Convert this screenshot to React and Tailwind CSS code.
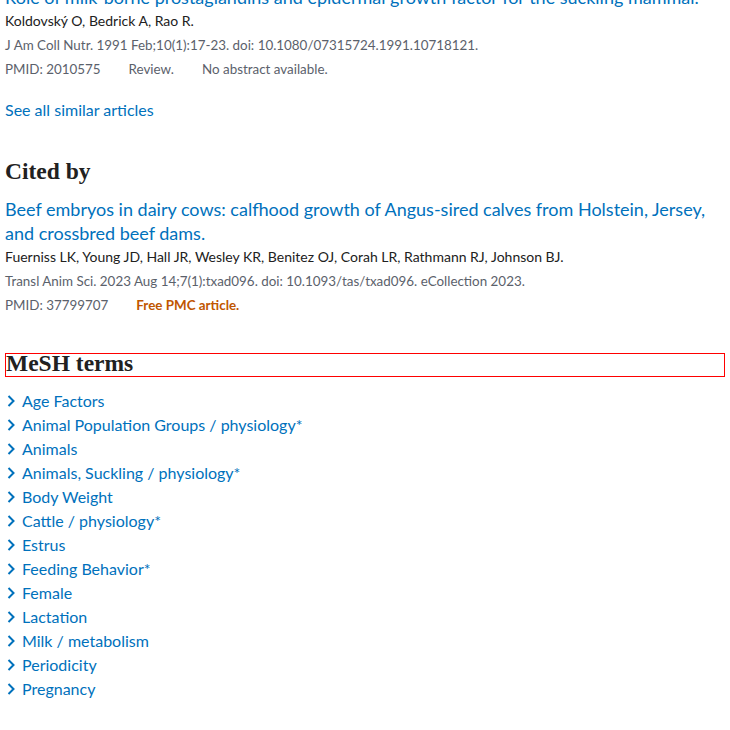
import React from 'react';

const sans = "font-['Lato','Liberation_Sans',sans-serif]";
const serif = "font-['Liberation_Serif','DejaVu_Serif',serif]";

const meshTerms = [
  'Age Factors',
  'Animal Population Groups / physiology*',
  'Animals',
  'Animals, Suckling / physiology*',
  'Body Weight',
  'Cattle / physiology*',
  'Estrus',
  'Feeding Behavior*',
  'Female',
  'Lactation',
  'Milk / metabolism',
  'Periodicity',
  'Pregnancy',
];

function Chevron() {
  return (
    <svg viewBox="0 0 10 12" className="w-[10px] h-[12px] ml-[1px] mr-[6px] shrink-0" fill="none" stroke="currentColor" strokeWidth="2">
      <path d="M2.5 1 L7.5 6 L2.5 11" />
    </svg>
  );
}

function Docsum({ title, authors, citation, children }) {
  return (
    <div>
      <a href="#" className="block text-[18px] leading-[24px] text-[#0071bc]">{title}</a>
      <div className="text-[14px] leading-[24px] text-[#212121]">{authors}</div>
      <div className="text-[13.4px] leading-[24px] text-[#5b616b]">{citation}</div>
      <div className="flex text-[13.4px] leading-[24px] text-[#5b616b] gap-[28px]">{children}</div>
    </div>
  );
}

function App() {
  return (
    <div className={`min-h-screen bg-white overflow-hidden px-[5px] ${sans}`}>
      <div className="-mt-[15px]">
        <Docsum
          title="Role of milk-borne prostaglandins and epidermal growth factor for the suckling mammal."
          authors="Koldovský O, Bedrick A, Rao R."
          citation="J Am Coll Nutr. 1991 Feb;10(1):17-23. doi: 10.1080/07315724.1991.10718121."
        >
          <span>PMID: 2010575</span>
          <span>Review.</span>
          <span>No abstract available.</span>
        </Docsum>
      </div>

      <a href="#" className="block mt-[17px] text-[16px] leading-[24px] text-[#0071bc]">See all similar articles</a>

      <h2 className={`${serif} font-bold text-[23.5px] leading-[26px] text-[#212121] mt-[36px] mb-[13px]`}>Cited by</h2>
      <Docsum
        title="Beef embryos in dairy cows: calfhood growth of Angus-sired calves from Holstein, Jersey, and crossbred beef dams."
        authors="Fuerniss LK, Young JD, Hall JR, Wesley KR, Benitez OJ, Corah LR, Rathmann RJ, Johnson BJ."
        citation="Transl Anim Sci. 2023 Aug 14;7(1):txad096. doi: 10.1093/tas/txad096. eCollection 2023."
      >
        <span>PMID: 37799707</span>
        <span className="font-bold text-[#c05600]">Free PMC article.</span>
      </Docsum>

      <h2 className={`${serif} font-bold text-[23.5px] leading-[18px] pb-[4px] text-[#212121] mt-[36px] border border-[#ff0000]`}>MeSH terms</h2>
      <ul className="mt-[12px]">
        {meshTerms.map((term) => (
          <li key={term} className="flex items-center text-[16px] leading-[24px] text-[#0071bc]">
            <Chevron />
            <a href="#">{term}</a>
          </li>
        ))}
      </ul>
    </div>
  );
}

export default App;
